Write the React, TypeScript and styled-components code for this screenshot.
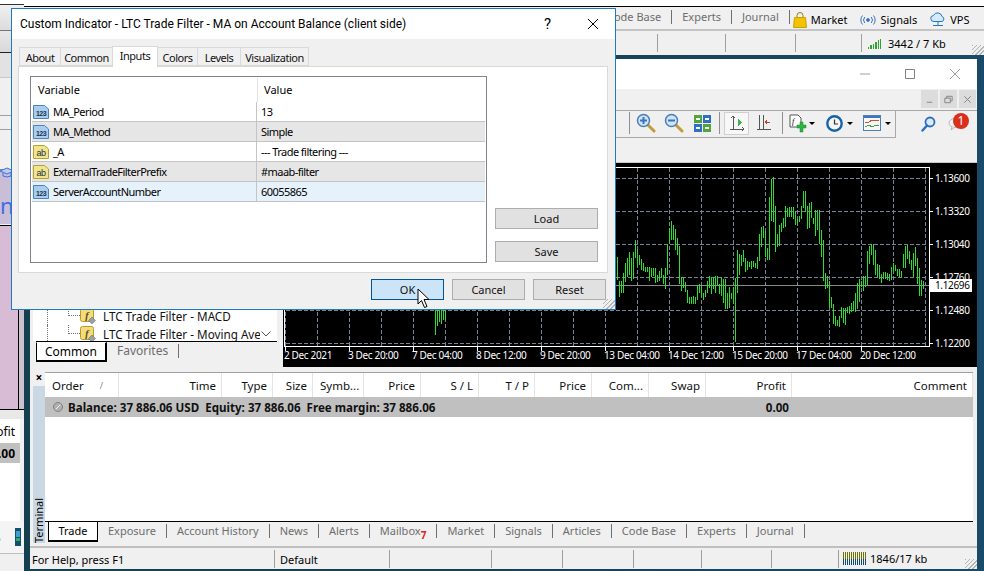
import React from 'react'
import styled, { createGlobalStyle } from 'styled-components'

const UI = `"Noto Sans", "Liberation Sans", Arial, sans-serif`

const GlobalStyle = createGlobalStyle`
  html, body { margin: 0; padding: 0; width: 984px; height: 571px; overflow: hidden; }
  * { box-sizing: border-box; }
  #root { width: 984px; height: 571px; }
`

const Desktop = styled.div`
  position: relative;
  width: 984px;
  height: 571px;
  overflow: hidden;
  background: linear-gradient(90deg, #15404f 0, #15404f 40%, #1a4a6a 100%);
  font-family: ${UI};
  font-size: 11px;
  color: #000;
`

/* ---------- window behind, top of the screen ---------- */
const TopWindow = styled.div`
  position: absolute;
  left: 0;
  top: 0;
  width: 984px;
  height: 55px;
  background: #f0f0f0;
  display: flex;
  flex-direction: column;
`
const TopBlank = styled.div`
  height: 7px;
  background: #fff;
  border-bottom: 1px solid #000;
`
const TopTabs = styled.div`
  height: 24px;
  display: flex;
  align-items: center;
  padding-left: 597px;
  border-bottom: 2px solid #c4c4c4;
  white-space: nowrap;
`
const TopTab = styled.span`
  padding: 0 10px;
  height: 14px;
  line-height: 14px;
  margin-top: -2px;
  color: #6d6d6d;
  border-right: 1px solid #707070;
  &:last-of-type { border-right: 0; }
`
const TopLink = styled.span<{ $left: number }>`
  display: flex;
  align-items: center;
  gap: 4px;
  margin-left: ${(p) => p.$left}px;
  padding-top: 3px;
`
const TopStatus = styled.div`
  flex: 1;
  display: flex;
  align-items: center;
  padding-left: 657px;
  position: relative;
`
const TopCell = styled.span<{ $w: number }>`
  width: ${(p) => p.$w}px;
  height: 18px;
  border-left: 1px solid #a0a0a0;
  display: flex;
  align-items: center;
  gap: 6px;
  padding-left: 6px;
`
const Grip = styled.span`
  position: absolute;
  right: 0;
  bottom: 0;
  width: 12px;
  height: 10px;
  background: repeating-linear-gradient(135deg, #b4b4b4 0 1px, transparent 1px 3px);
`

/* ---------- window behind, left edge ---------- */
const LeftWindow = styled.div`
  position: absolute;
  left: 0;
  top: 0;
  width: 24px;
  height: 571px;
  display: flex;
  flex-direction: column;
  overflow: hidden;
  background: #f0f0f0;
`
const LeftBand = styled.div<{ $h: number; $bg: string; $line?: string }>`
  height: ${(p) => p.$h}px;
  background: ${(p) => p.$bg};
  border-bottom: ${(p) => (p.$line ? `1px solid ${p.$line}` : '0')};
  flex: none;
`
const LeftBlue = styled(LeftBand)`
  color: #3f6fe0;
  font-size: 22px;
  line-height: 22px;
  display: flex;
  flex-direction: column;
  justify-content: flex-end;
  gap: 2px;
  padding-bottom: 8px;
`
const LeftPink = styled.div`
  height: 185px;
  flex: none;
  background: #d8bcd5;
  border-top: 1px solid #000;
  border-bottom: 1px solid #000;
  margin-top: 1px;
  position: relative;
  &::after {
    content: '';
    position: absolute;
    left: 18px;
    top: 0;
    bottom: 0;
    width: 6px;
    background: #cfc0d0;
    border-left: 1px solid #000;
  }
`
const LeftRow = styled.div<{ $h: number; $bold?: boolean; $gray?: boolean }>`
  height: ${(p) => p.$h}px;
  flex: none;
  display: flex;
  justify-content: flex-end;
  align-items: center;
  width: 20px;
  padding-right: 5px;
  white-space: nowrap;
  font-size: 12px;
  font-weight: ${(p) => (p.$bold ? 700 : 400)};
  background: ${(p) => (p.$gray ? '#c0c0c0' : '#fff')};
`
const LeftWhite = styled.div`
  height: 58px;
  width: 20px;
  flex: none;
  background: #fff;
`
const LeftTabs = styled.div`
  height: 33px;
  width: 24px;
  flex: none;
  background: #f4f4f4;
  border-bottom: 1px solid #c0c0c0;
  display: flex;
  align-items: center;
  justify-content: space-between;
  padding: 0 3px 0 0;
  font-size: 12px;
`
const LeftTabText = styled.span`
  margin-left: -6px;
`

/* ---------- main terminal window ---------- */
const MainWindow = styled.div`
  position: absolute;
  left: 30px;
  top: 59px;
  width: 947px;
  height: 510px;
  background: #f0f0f0;
  display: flex;
  flex-direction: column;
`
const MainTitle = styled.div`
  height: 30px;
  flex: none;
  background: #fff;
  display: flex;
  justify-content: flex-end;
`
const WinButton = styled.span`
  width: 45px;
  height: 30px;
  display: flex;
  align-items: center;
  justify-content: center;
`
const MenuRow = styled.div`
  height: 21px;
  flex: none;
  display: flex;
  justify-content: flex-end;
  align-items: flex-start;
  gap: 2px;
  padding: 1px 1px 0 0;
`
const MdiButton = styled.span`
  width: 17px;
  height: 18px;
  background: #dcdcdc;
  display: flex;
  align-items: center;
  justify-content: center;
`
const ToolRow = styled.div`
  height: 28px;
  flex: none;
  display: flex;
  border-top: 1px solid #a8a8a8;
`
const ToolGroup = styled.div`
  width: 866px;
  display: flex;
  align-items: center;
  padding: 0 0 2px 584px;
  border-right: 1px solid #a8a8a8;
  border-bottom: 1px solid #a8a8a8;
`
const ToolSep = styled.span<{ $l: number; $r: number }>`
  width: 1px;
  height: 22px;
  flex: none;
  background: #909090;
  margin: 0 ${(p) => p.$r}px 0 ${(p) => p.$l}px;
`
const ToolSlot = styled.span<{ $w: number; $on?: boolean }>`
  width: ${(p) => p.$w}px;
  height: 23px;
  flex: none;
  display: flex;
  align-items: center;
  justify-content: center;
  overflow: hidden;
  ${(p) => (p.$on ? 'background: #f7f7f7; border: 1px solid #d0d0d0;' : '')}
`
const Caret = styled.span`
  width: 0;
  height: 0;
  flex: none;
  margin: 0 4px 0 -2px;
  border-left: 3px solid transparent;
  border-right: 3px solid transparent;
  border-top: 3px solid #000;
`
const ToolRight = styled.div`
  flex: 1;
  display: flex;
  align-items: center;
  padding: 0 0 2px 25px;
  gap: 2px;
  position: relative;
`
const ChatBadge = styled.span`
  position: absolute;
  left: 57px;
  top: 2px;
  width: 16px;
  height: 16px;
  border-radius: 50%;
  background: #d9301c;
  color: #fff;
  font-size: 12px;
  line-height: 16px;
  text-align: center;
`
const RebarRow = styled.div`
  height: 25px;
  flex: none;
  border-bottom: 1px solid #c8c8c8;
`
const WorkRow = styled.div`
  height: 204px;
  flex: none;
  display: flex;
  padding-left: 3px;
`

/* navigator */
const Navigator = styled.div`
  width: 247px;
  height: 200px;
  display: flex;
  flex-direction: column;
  margin-right: 3px;
  flex: none;
`
const TreeArea = styled.div`
  flex: 1;
  background: #fff;
  margin-right: 3px;
  display: flex;
  flex-direction: column;
  justify-content: flex-end;
  min-height: 0;
`
const TreeRow = styled.div`
  height: 18px;
  display: flex;
  align-items: center;
  padding: 0 5px 0 14px;
  white-space: nowrap;
  flex: none;
  position: relative;
  top: 2px;
`
const TreeStem = styled.span`
  width: 21px;
  height: 18px;
  flex: none;
  border-left: 1px dotted #707070;
`
const TreeBranch = styled.span`
  width: 12px;
  height: 9px;
  flex: none;
  align-self: flex-start;
  border-left: 1px dotted #707070;
  border-bottom: 1px dotted #707070;
`
const TreeText = styled.span`
  flex: 1;
  margin-left: 7px;
  overflow: hidden;
  font-size: 11.7px;
  color: #111;
`
const NavTabs = styled.div`
  height: 21px;
  flex: none;
  display: flex;
  align-items: flex-start;
  padding-left: 3px;
  font-size: 12px;
  background: #f0f0f0;
  position: relative;
`
const NavActive = styled.span`
  width: 71px;
  height: 20px;
  background: #fff;
  border: 1px solid #000;
  border-top-color: #fff;
  border-bottom-width: 2px;
  border-right-width: 2px;
  text-align: center;
  line-height: 18px;
`
const NavTabLine = styled.div`
  height: 1px;
  background: #000;
  margin: 0 3px 0 3px;
  flex: none;
  position: relative;
`
const NavIdle = styled.span`
  height: 14px;
  margin-top: 2px;
  padding: 0 10px;
  line-height: 14px;
  color: #6d6d6d;
  border-right: 1px solid #707070;
`

/* chart */
const ChartBox = styled.div`
  flex: 1;
  background: #000;
  overflow: hidden;
`
const ChartSvg = styled.svg`
  display: block;
  font-family: ${UI};
  font-size: 10px;
  letter-spacing: -0.35px;
`

/* terminal */
const TerminalPane = styled.div`
  height: 171px;
  flex: none;
  margin-top: 5px;
  display: flex;
  padding-left: 3px;
`
const TerminalSide = styled.div`
  width: 12px;
  flex: none;
  display: flex;
  flex-direction: column;
  background: #cad8e4;
`
const SideClose = styled.div`
  height: 14px;
  background: #f0f0f0;
  font-size: 12px;
  font-weight: 700;
  line-height: 12px;
  text-align: center;
`
const SideLabel = styled.div`
  margin-top: auto;
  writing-mode: vertical-rl;
  transform: rotate(180deg);
  font-size: 11px;
  line-height: 12px;
  height: 43px;
`
const TerminalMain = styled.div`
  width: 928px;
  flex: none;
  display: flex;
  flex-direction: column;
`
const TableArea = styled.div`
  flex: 1;
  background: #fff;
  border-top: 1px solid #a0a0a0;
`
const columns = '74px 103px 51px 40px 51px 57px 58px 56px 57px 57px 57px 86px 181px'
const HeadRow = styled.div`
  display: grid;
  grid-template-columns: ${columns};
  height: 24px;
`
const HeadCell = styled.span<{ $left?: boolean }>`
  display: flex;
  align-items: center;
  justify-content: ${(p) => (p.$left ? 'flex-start' : 'flex-end')};
  padding: 0 ${(p) => (p.$left ? 0 : 5)}px 0 ${(p) => (p.$left ? 7 : 0)}px;
  border-right: 1px solid #e4e4e4;
  font-size: 11.5px;
  white-space: nowrap;
  overflow: hidden;
  color: #111;
`
const SortMark = styled.span`
  margin-left: 16px;
  color: #888;
  font-size: 9px;
`
const BalanceRow = styled.div`
  display: grid;
  grid-template-columns: ${columns};
  height: 20px;
  background: #c0c0c0;
  font-size: 11.6px;
  font-weight: 700;
  align-items: center;
  white-space: nowrap;
  color: #111;
`
const BalanceText = styled.span`
  grid-column: 1 / 12;
  display: flex;
  align-items: center;
  gap: 4px;
  padding-left: 7px;
`
const BalanceAmount = styled.span`
  text-align: right;
  padding-right: 3px;
`
const TabStrip = styled.div`
  height: 22px;
  flex: none;
  border-top: 1px solid #000;
  display: flex;
  align-items: flex-start;
  padding-left: 3px;
`
const ActiveTab = styled.span`
  width: 50px;
  height: 20px;
  background: #fff;
  border-left: 1px solid #000;
  border-right: 1px solid #000;
  border-bottom: 2px solid #000;
  text-align: center;
  line-height: 18px;
`
const IdleTab = styled.span`
  height: 14px;
  margin-top: 2px;
  padding: 0 10px;
  line-height: 14px;
  color: #6d6d6d;
  border-right: 1px solid #707070;
  white-space: nowrap;
`
const RedCount = styled.sub`
  color: #e02020;
  font-size: 10px;
  font-weight: 700;
  line-height: 0;
  vertical-align: -4px;
`
const StatusBar = styled.div`
  height: 23px;
  flex: none;
  margin-top: 3px;
  border-top: 2px solid #c0c0c0;
  display: flex;
  align-items: center;
  position: relative;
`
const StatusCell = styled.span<{ $w: number; $pad: number }>`
  width: ${(p) => p.$w}px;
  height: 18px;
  flex: none;
  border-right: 1px solid #a0a0a0;
  padding-left: ${(p) => p.$pad}px;
  line-height: 19px;
  white-space: nowrap;
`
const StatusNet = styled.span`
  display: flex;
  align-items: center;
  gap: 4px;
  padding-left: 4px;
`

/* ---------- dialog ---------- */
const Dialog = styled.div`
  position: absolute;
  left: 11px;
  top: 8px;
  width: 605px;
  height: 302px;
  background: #f0f0f0;
  border: 1px solid #1f7ac4;
  display: flex;
  flex-direction: column;
`
const DialogTitle = styled.div`
  height: 30px;
  flex: none;
  background: #fff;
  display: flex;
  align-items: center;
  padding-left: 8px;
  font-family: Roboto, ${UI};
  font-size: 12px;
`
const TitleText = styled.span`
  flex: 1;
  white-space: nowrap;
`
const TitleButton = styled.span`
  width: 45px;
  text-align: center;
  font-size: 15px;
  display: flex;
  justify-content: center;
`
const DialogTabs = styled.div`
  height: 27px;
  flex: none;
  display: flex;
  align-items: flex-end;
  padding-left: 8px;
  position: relative;
  z-index: 1;
`
const DialogTab = styled.span<{ $w: number; $on?: boolean }>`
  width: ${(p) => p.$w}px;
  height: ${(p) => (p.$on ? 21 : 19)}px;
  margin-bottom: ${(p) => (p.$on ? -1 : 0)}px;
  background: ${(p) => (p.$on ? '#fff' : '#f0f0f0')};
  border: 1px solid #d9d9d9;
  border-bottom: ${(p) => (p.$on ? 0 : '1px solid #d9d9d9')};
  margin-left: -1px;
  text-align: center;
  line-height: ${(p) => (p.$on ? 18 : 20)}px;
  font-size: 11px;
  letter-spacing: -0.5px;
  color: #111;
`
const DialogPage = styled.div`
  height: 207px;
  flex: none;
  margin: 0 7px 0 6px;
  background: #fff;
  border: 1px solid #d9d9d9;
  display: flex;
  padding: 9px 10px 9px 11px;
  gap: 8px;
`
const VarList = styled.div`
  width: 457px;
  flex: none;
  border: 1px solid #7f848c;
  display: flex;
  flex-direction: column;
  padding: 1px;
`
const VarHead = styled.div`
  height: 24px;
  flex: none;
  display: grid;
  grid-template-columns: 225px 1fr;
  align-items: center;
  font-size: 11px;
`
const VarHeadCell = styled.span`
  height: 100%;
  display: flex;
  align-items: center;
  padding: 0 0 2px 6px;
  & + & { border-left: 1px solid #e4e4e4; }
`
const VarRow = styled.div<{ $tone: 'white' | 'gray' | 'blue' }>`
  height: 20px;
  flex: none;
  display: grid;
  grid-template-columns: 225px 1fr;
  align-items: center;
  border-bottom: 1px solid #c4c4c4;
  font-size: 11px;
  letter-spacing: -0.55px;
  background: ${(p) => ({ white: '#fff', gray: '#e6e6e6', blue: '#e5f1fb' }[p.$tone])};
`
const VarName = styled.span`
  height: 100%;
  display: flex;
  align-items: center;
  gap: 4px;
  padding-left: 1px;
  border-right: 1px solid #c4c4c4;
  white-space: nowrap;
`
const VarValue = styled.span`
  padding-left: 4px;
  white-space: nowrap;
`
const SideButtons = styled.div`
  flex: 1;
  display: flex;
  flex-direction: column;
  justify-content: flex-end;
  gap: 12px;
  padding-bottom: 1px;
`
const DlgButton = styled.span<{ $on?: boolean; $w?: number }>`
  width: ${(p) => p.$w ?? 103}px;
  height: 21px;
  flex: none;
  display: flex;
  align-items: center;
  justify-content: center;
  background: ${(p) => (p.$on ? '#cce4f7' : '#e1e1e1')};
  border: 1px solid ${(p) => (p.$on ? '#005499' : '#adadad')};
  font-size: 11px;
  color: #111;
`
const DialogFoot = styled.div`
  flex: 1;
  display: flex;
  justify-content: flex-end;
  gap: 8px;
  padding: 6px 9px 0 0;
  position: relative;
`
const Cursor = styled.svg`
  position: absolute;
  left: 417px;
  top: 288px;
`

/* ---------- drawings ---------- */
const Bars: [number, number][] = [
  [257,280],[281,297],[281,293],[273,293],[263,282],[258,277],[252,275],[258,281],[252,279],[240,258],
  [249,266],[255,265],[259,270],[263,271],[267,272],[267,272],[267,281],[268,277],[268,276],[268,283],
  [275,282],[271,281],[268,277],[275,284],[268,289],[244,275],[228,244],[221,240],[225,240],[229,250],
  [238,255],[246,284],[277,291],[277,288],[282,292],[290,303],[297,304],[297,304],[296,304],[297,304],
  [285,300],[284,293],[286,296],[293,300],[290,297],[281,293],[276,288],[277,294],[277,289],[276,293],
  [276,286],[284,294],[277,296],[279,303],[279,309],[293,309],[287,308],[293,299],[287,304],[278,342],
  [250,293],[254,275],[255,266],[250,262],[258,272],[261,270],[262,267],[261,269],[261,267],[263,268],
  [257,269],[234,261],[227,247],[226,238],[231,257],[248,260],[197,260],[179,221],[177,222],[206,252],
  [234,247],[225,246],[223,232],[218,228],[206,227],[208,217],[207,217],[207,217],[207,219],[211,225],
  [219,225],[216,222],[206,219],[191,208],[191,211],[206,229],[203,228],[202,218],[218,224],[210,236],
  [210,230],[210,244],[230,257],[240,281],[273,289],[276,288],[281,307],[297,308],[304,324],[316,326],
  [320,326],[316,327],[307,318],[308,323],[308,325],[307,313],[306,314],[303,312],[301,311],[293,312],
  [283,309],[279,302],[281,287],[276,291],[276,287],[251,286],[246,264],[244,255],[244,265],[250,275],
  [264,277],[265,279],[274,283],[272,279],[272,279],[273,280],[274,281],[267,280],[263,272],[265,271],
  [269,276],[269,277],[271,278],[254,268],[246,268],[245,259],[251,264],[260,270],[253,277],[247,266],
  [258,284],[268,296],[280,296],[281,289],
]
const LeftBars: [number, number, number][] = [
  [435,300,335],[437,300,326],[439,300,322],[441,300,324],[443,300,320],[445,300,320],
]
const priceTicks = [[178, '1.13600'], [211, '1.13320'], [244, '1.13040'], [277, '1.12760'], [310, '1.12480'], [343, '1.12200']] as const
const timeTicks = [
  [285, '2 Dec 2021'], [349, '3 Dec 20:00'], [413, '7 Dec 04:00'], [477, '8 Dec 12:00'], [541, '9 Dec 20:00'],
  [605, '13 Dec 04:00'], [669, '14 Dec 12:00'], [733, '15 Dec 20:00'], [797, '17 Dec 04:00'], [861, '20 Dec 12:00'],
] as const
const gridXs = Array.from({ length: 20 }, (_, i) => 317 + i * 32)

const Chart = () => (
  <ChartSvg width={693} height={204} viewBox="283 163 693 204" shapeRendering="crispEdges">
    {priceTicks.map(([y]) => (
      <line key={y} x1={286} x2={928} y1={y + 0.5} y2={y + 0.5} stroke="#74859a" strokeDasharray="4 2" />
    ))}
    {[285, ...gridXs].map((x) => (
      <line key={x} x1={x + 0.5} x2={x + 0.5} y1={168} y2={346} stroke="#74859a" strokeDasharray="4 2" />
    ))}
    <line x1={284} x2={929} y1={285.5} y2={285.5} stroke="#8a8a8a" />
    {LeftBars.map(([x, a, b]) => (
      <line key={x} x1={x + 0.5} x2={x + 0.5} y1={a} y2={b} stroke="#2fdc2f" />
    ))}
    {Bars.map(([a, b], i) => (
      <line key={i} x1={617.5 + i * 2} x2={617.5 + i * 2} y1={a} y2={b} stroke="#2fdc2f" />
    ))}
    <rect x={284.5} y={167.5} width={645} height={179} fill="none" stroke="#fff" />
    {timeTicks.map(([x, label]) => (
      <g key={x}>
        <line x1={x + 0.5} x2={x + 0.5} y1={347} y2={351} stroke="#fff" />
        <text x={x - 1} y={359} fill="#fff" shapeRendering="auto">{label}</text>
      </g>
    ))}
    {priceTicks.map(([y, label]) => (
      <g key={y}>
        <line x1={930} x2={933} y1={y + 0.5} y2={y + 0.5} stroke="#fff" />
        <text x={935} y={y + 4} fill="#fff" shapeRendering="auto">{label}</text>
      </g>
    ))}
    <rect x={930} y={279} width={42} height={13} fill="#fff" />
    <text x={935} y={289} fill="#000" shapeRendering="auto">1.12696</text>
  </ChartSvg>
)

const ZoomIcon = ({ plus }: { plus?: boolean }) => (
  <svg width="20" height="20" viewBox="0 0 20 20">
    <line x1="11.5" y1="11.5" x2="18" y2="18" stroke="#c59a3a" strokeWidth="3" strokeLinecap="round" />
    <circle cx="7.5" cy="7.5" r="6" fill="#cfe4f7" stroke="#4a7fb5" strokeWidth="1.5" />
    <rect x="4" y="6.5" width="7" height="2" fill="#3a74c0" />
    {plus && <rect x="6.5" y="4" width="2" height="7" fill="#3a74c0" />}
  </svg>
)
const TileIcon = () => (
  <svg width="17" height="17" viewBox="0 0 17 17" shapeRendering="crispEdges">
    <rect x="0" y="0" width="8" height="8" fill="#4fa63a" />
    <rect x="9" y="0" width="8" height="8" fill="#2f6fc8" />
    <rect x="0" y="9" width="8" height="8" fill="#2f6fc8" />
    <rect x="9" y="9" width="8" height="8" fill="#4fa63a" />
    <rect x="2" y="3" width="4" height="2" fill="#fff" />
    <rect x="11" y="3" width="4" height="2" fill="#fff" />
    <rect x="2" y="12" width="4" height="2" fill="#fff" />
    <rect x="11" y="12" width="4" height="2" fill="#fff" />
  </svg>
)
const ShiftIcon = () => (
  <svg width="16" height="18" viewBox="0 0 16 18" shapeRendering="crispEdges">
    <path d="M4 2v13M1 15h14" stroke="#555" fill="none" />
    <path d="M2 4l2-2 2 2M13 13l2 2-2 2" stroke="#555" fill="none" />
    <path d="M9 5l4 3.500-4 3.500z" fill="#39b54a" />
  </svg>
)
const ScrollIcon = () => (
  <svg width="16" height="18" viewBox="0 0 16 18" shapeRendering="crispEdges">
    <path d="M3 1v14M7 1v14M1 15h14" stroke="#555" fill="none" />
    <path d="M9 8h5" stroke="#b5482a" />
    <path d="M11 5l-3 3 3 3z" fill="#b5482a" />
  </svg>
)
const AddIcon = () => (
  <svg width="18" height="19" viewBox="0 0 18 19">
    <path d="M1 1h8l3 3v9H1z" fill="#fff" stroke="#555" />
    <text x="3" y="10" fontSize="8" fontStyle="italic" fontFamily="Liberation Serif, serif">f</text>
    <path d="M8 11h3V8h3v3h3v3h-3v4h-3v-4H8z" fill="#2fb344" stroke="#178a2c" strokeWidth="0.5" />
  </svg>
)
const ClockIcon = () => (
  <svg width="17" height="17" viewBox="0 0 17 17">
    <circle cx="8.5" cy="8.5" r="7.2" fill="#f5f5f5" stroke="#1763a8" strokeWidth="2.4" />
    <path d="M8.5 4.500v4.500h3.500" stroke="#333" strokeWidth="1.2" fill="none" />
  </svg>
)
const TemplateIcon = () => (
  <svg width="18" height="16" viewBox="0 0 18 16" shapeRendering="crispEdges">
    <rect x="0.5" y="0.5" width="17" height="15" fill="#f7f7f7" stroke="#4f7fb0" />
    <rect x="1" y="1" width="16" height="2" fill="#3c78c0" />
    <path d="M2 7h4l3-2 3 1 4-1" stroke="#c0562a" fill="none" />
    <path d="M2 12l4-2 3 2 4-2 3 1" stroke="#3fa34a" fill="none" />
  </svg>
)
const SearchIcon = () => (
  <svg width="15" height="16" viewBox="0 0 15 16">
    <circle cx="9" cy="6" r="4.5" fill="#dbeaf8" stroke="#2a6fc0" strokeWidth="1.8" />
    <line x1="6" y1="9.5" x2="1.5" y2="14.5" stroke="#2a6fc0" strokeWidth="2.4" strokeLinecap="round" />
  </svg>
)
const ChatIcon = () => (
  <svg width="14" height="14" viewBox="0 0 14 14">
    <ellipse cx="7" cy="6" rx="6" ry="4.5" fill="#f2f2f2" stroke="#b8b8b8" />
    <path d="M4 10l-1 3 4-3" fill="#f2f2f2" stroke="#b8b8b8" />
  </svg>
)
const BagIcon = () => (
  <svg width="14" height="16" viewBox="0 0 14 16">
    <path d="M4 6V3.5a3 3 0 0 1 6 0V6" fill="none" stroke="#9a7a10" />
    <path d="M1.5 5.5h11L13.500 15.500H.5z" fill="#f2c400" stroke="#d09f00" />
  </svg>
)
const SignalIcon = () => (
  <svg width="16" height="12" viewBox="0 0 16 12" fill="none" stroke="#3a72c4">
    <circle cx="8" cy="6" r="1.4" fill="#3a72c4" />
    <path d="M4.800 3a4.500 4.500 0 0 0 0 6M11.200 3a4.500 4.500 0 0 1 0 6M2.500 1.500a7 7 0 0 0 0 9M13.500 1.500a7 7 0 0 1 0 9" />
  </svg>
)
const CloudIcon = () => (
  <svg width="16" height="15" viewBox="0 0 16 15" fill="#d7e9fa" stroke="#1f78c8">
    <path d="M4 9.500a3 3 0 0 1-.5-6 4.500 4.500 0 0 1 8.500 1 2.600 2.600 0 0 1 0 5z" />
    <path d="M8 9.500V13M3 13.500h10" fill="none" />
  </svg>
)
const CapIcon = () => (
  <svg width="14" height="11" viewBox="0 0 14 11" fill="#b9cdea" stroke="#3f6fe0" style={{ marginBottom: 14, flex: 'none' }}>
    <path d="M0 4l7-3 7 3-7 3z" />
    <path d="M3 6v3q4 2 8 0V6" fill="none" />
  </svg>
)
const TypeIcon = ({ kind }: { kind: 'num' | 'text' }) => {
  const fill = kind === 'num' ? '#a9cdef' : '#f1e48d'
  const edge = kind === 'num' ? '#4a84bd' : '#b5a22f'
  return (
    <svg width="16" height="16" viewBox="0 0 16 16" style={{ flex: 'none' }}>
      <path d="M.5 1.500h11l4 3.500v9.500H.5z" fill={fill} stroke={edge} />
      <text x="8" y="11.500" textAnchor="middle" fontSize={kind === 'num' ? 7 : 9} fontWeight={kind === 'num' ? 700 : 400} fontFamily="Liberation Sans, sans-serif" fill="#22324a">
        {kind === 'num' ? '123' : 'ab'}
      </text>
    </svg>
  )
}
const FuncIcon = () => (
  <svg width="16" height="16" viewBox="0 0 16 16" style={{ flex: 'none' }}>
    <rect x="0.500" y="0.500" width="13" height="13" rx="2" fill="#f2dc7d" stroke="#b99a25" />
    <text x="7" y="11" textAnchor="middle" fontSize="10" fontStyle="italic" fontWeight="700" fontFamily="Liberation Serif, serif" fill="#5a4710">f</text>
    <path d="M12 9l3.500 3.500L12 16l-3.500-3.500z" fill="#9aa0a6" stroke="#666" strokeWidth="0.500" />
  </svg>
)
const Glyph = ({ d, color = '#a0a0a0', size = 12 }: { d: string; color?: string; size?: number }) => (
  <svg width={size} height={size} viewBox="0 0 12 12" fill="none" stroke={color} style={{ flex: 'none' }}>
    <path d={d} />
  </svg>
)
const CLOSE = 'M1 1l10 10M11 1L1 11'
const BarsIcon = ({ color }: { color: string }) => (
  <svg width="14" height="11" viewBox="0 0 14 11" shapeRendering="crispEdges" fill={color}>
    {[0, 1, 2, 3, 4, 5].map((i) => (
      <rect key={i} x={i * 2.4} y={9 - i * 1.7} width="1.4" height={2 + i * 1.7} />
    ))}
  </svg>
)
const NetIcon = () => (
  <svg width="23" height="13" viewBox="0 0 23 13" shapeRendering="crispEdges">
    {Array.from({ length: 12 }, (_, i) => (
      <g key={i}>
        <rect x={i * 2} y={0} width={1} height={7} fill="#6f7300" />
        <rect x={i * 2} y={7} width={1} height={6} fill="#0e4a6e" />
      </g>
    ))}
  </svg>
)
const PhoneIcon = () => (
  <svg width="6" height="18" viewBox="0 0 6 18" shapeRendering="crispEdges">
    <rect x="0" y="0" width="6" height="18" rx="1" fill="#14506e" />
    <rect x="1" y="3" width="4" height="6" fill="#3ca0d0" />
    <rect x="1" y="10" width="4" height="3" fill="#39a85a" />
  </svg>
)
const ArrowCursor = () => (
  <Cursor width="14" height="21" viewBox="0 0 14 21">
    <path d="M1 1v15l3.500-3.500 3 7 2.500-1-3-7h5z" fill="#fff" stroke="#000" />
  </Cursor>
)

const varRows = [
  { kind: 'num', tone: 'white', name: 'MA_Period', value: '13' },
  { kind: 'num', tone: 'gray', name: 'MA_Method', value: 'Simple' },
  { kind: 'text', tone: 'white', name: '_A', value: '--- Trade filtering ---' },
  { kind: 'text', tone: 'gray', name: 'ExternalTradeFilterPrefix', value: '#maab-filter' },
  { kind: 'num', tone: 'blue', name: 'ServerAccountNumber', value: '60055865' },
] as const

const dialogTabs = [['About', 42], ['Common', 53], ['Inputs', 46], ['Colors', 41], ['Levels', 44], ['Visualization', 69]] as const

const headers: [string, boolean][] = [
  ['Order', true], ['Time', false], ['Type', false], ['Size', false], ['Symb...', true], ['Price', false], ['S / L', false],
  ['T / P', false], ['Price', false], ['Com...', false], ['Swap', false], ['Profit', false], ['Comment', false],
]
const terminalTabs = ['Exposure', 'Account History', 'News', 'Alerts', 'Mailbox', 'Market', 'Signals', 'Articles', 'Code Base', 'Experts', 'Journal']
const statusCells = [[245, 2, 'For Help, press F1'], [115, 5, 'Default'], [102, 0, ''], [71, 0, ''], [71, 0, ''], [68, 0, ''], [70, 0, ''], [67, 0, '']] as const

export default function App() {
  return (
    <Desktop>
      <GlobalStyle />

      <TopWindow>
        <TopBlank />
        <TopTabs>
          <TopTab>Code Base</TopTab>
          <TopTab>Experts</TopTab>
          <TopTab>Journal</TopTab>
          <TopLink $left={3}><BagIcon />Market</TopLink>
          <TopLink $left={13}><SignalIcon />Signals</TopLink>
          <TopLink $left={13}><CloudIcon />VPS</TopLink>
        </TopTabs>
        <TopStatus>
          <TopCell $w={68} />
          <TopCell $w={70} />
          <TopCell $w={66} />
          <TopCell $w={120}><BarsIcon color="#2fa52f" />3442 / 7 Kb</TopCell>
          <Grip />
        </TopStatus>
      </TopWindow>

      <LeftWindow>
        <LeftBand $h={5} $bg="#fff" $line="#333" />
        <LeftBand $h={26} $bg="linear-gradient(#f0f0f0,#dcdcdc)" $line="#777" />
        <LeftBand $h={22} $bg="linear-gradient(#e8e8e8,#d8d8d8)" $line="#222" />
        <LeftBand $h={25} $bg="#e2e2e2" $line="#c8c8c8" />
        <LeftBand $h={38} $bg="#f0f0f0" $line="#a0a0a0" />
        <LeftBand $h={14} $bg="#f0f0f0" $line="#a0a0a0" />
        <LeftBand $h={40} $bg="#f0f0f0" $line="#888" />
        <LeftBlue $h={54} $bg="#c9bdd8"><CapIcon />nt</LeftBlue>
        <LeftPink />
        <LeftBand $h={9} $bg="#e8e8e8" />
        <LeftRow $h={24}>ofit</LeftRow>
        <LeftRow $h={20} $bold $gray>.00</LeftRow>
        <LeftWhite />
        <LeftTabs><LeftTabText>S</LeftTabText><PhoneIcon /></LeftTabs>
      </LeftWindow>

      <MainWindow>
        <MainTitle>
          <WinButton><Glyph d="M1 6h10" /></WinButton>
          <WinButton><Glyph d="M1.500 1.500h9v9h-9z" color="#808080" /></WinButton>
          <WinButton><Glyph d={CLOSE} /></WinButton>
        </MainTitle>
        <MenuRow>
          <MdiButton><Glyph d="M3 9h6" color="#808080" size={11} /></MdiButton>
          <MdiButton><Glyph d="M2 4.500h6v5H2zM4 4.500V2.500h6v5H8" color="#808080" size={11} /></MdiButton>
          <MdiButton><Glyph d="M2.500 2.500l7 7M9.500 2.500l-7 7" color="#808080" size={11} /></MdiButton>
        </MenuRow>
        <ToolRow>
          <ToolGroup>
            <ToolSlot $w={14} />
            <ToolSep $l={1} $r={2} />
            <ToolSlot $w={28}><ZoomIcon plus /></ToolSlot>
            <ToolSlot $w={28}><ZoomIcon /></ToolSlot>
            <ToolSlot $w={28}><TileIcon /></ToolSlot>
            <ToolSep $l={3} $r={4} />
            <ToolSlot $w={25} $on><ShiftIcon /></ToolSlot>
            <ToolSlot $w={30}><ScrollIcon /></ToolSlot>
            <ToolSep $l={3} $r={2} />
            <ToolSlot $w={26}><AddIcon /></ToolSlot>
            <Caret />
            <ToolSlot $w={30}><ClockIcon /></ToolSlot>
            <Caret />
            <ToolSlot $w={30}><TemplateIcon /></ToolSlot>
            <Caret />
          </ToolGroup>
          <ToolRight>
            <SearchIcon />
            <ToolSlot $w={8} />
            <ChatIcon />
            <ChatBadge>1</ChatBadge>
          </ToolRight>
        </ToolRow>
        <RebarRow />
        <WorkRow>
          <Navigator>
            <TreeArea>
              <TreeRow><TreeStem /><TreeBranch /><FuncIcon /><TreeText>LTC Trade Filter - MACD</TreeText></TreeRow>
              <TreeRow><TreeStem /><TreeBranch /><FuncIcon /><TreeText>LTC Trade Filter - Moving Average</TreeText><Glyph d="M1.500 3.500L6 8l4.500-4.500" color="#555" /></TreeRow>
            </TreeArea>
            <NavTabLine />
            <NavTabs>
              <NavActive>Common</NavActive>
              <NavIdle>Favorites</NavIdle>
            </NavTabs>
          </Navigator>
          <ChartBox><Chart /></ChartBox>
        </WorkRow>
        <TerminalPane>
          <TerminalSide>
            <SideClose>×</SideClose>
            <SideLabel>Terminal</SideLabel>
          </TerminalSide>
          <TerminalMain>
            <TableArea>
              <HeadRow>
                {headers.map(([h, left], i) => (
                  <HeadCell key={i} $left={left}>
                    {h}
                    {i === 0 && <SortMark>/</SortMark>}
                  </HeadCell>
                ))}
              </HeadRow>
              <BalanceRow>
                <BalanceText>
                  <svg width="12" height="12" viewBox="0 0 12 12">
                    <circle cx="6" cy="6" r="4.500" fill="#b0b0b0" stroke="#808080" />
                    <path d="M3.500 8.500l5-5" stroke="#f0f0f0" />
                  </svg>
                  Balance: 37 886.06 USD&nbsp; Equity: 37 886.06&nbsp; Free margin: 37 886.06
                </BalanceText>
                <BalanceAmount>0.00</BalanceAmount>
              </BalanceRow>
            </TableArea>
            <TabStrip>
              <ActiveTab>Trade</ActiveTab>
              {terminalTabs.map((t) => (
                <IdleTab key={t}>
                  {t}
                  {t === 'Mailbox' && <RedCount>7</RedCount>}
                </IdleTab>
              ))}
            </TabStrip>
          </TerminalMain>
        </TerminalPane>
        <StatusBar>
          {statusCells.map(([w, pad, text], i) => (
            <StatusCell key={i} $w={w} $pad={pad}>{text}</StatusCell>
          ))}
          <StatusNet><NetIcon />1846/17 kb</StatusNet>
          <Grip />
        </StatusBar>
      </MainWindow>

      <Dialog>
        <DialogTitle>
          <TitleText>Custom Indicator - LTC Trade Filter - MA on Account Balance (client side)</TitleText>
          <TitleButton>?</TitleButton>
          <TitleButton><Glyph d={CLOSE} color="#000" /></TitleButton>
        </DialogTitle>
        <DialogTabs>
          {dialogTabs.map(([t, w]) => (
            <DialogTab key={t} $w={w} $on={t === 'Inputs'}>{t}</DialogTab>
          ))}
        </DialogTabs>
        <DialogPage>
          <VarList>
            <VarHead>
              <VarHeadCell>Variable</VarHeadCell>
              <VarHeadCell>Value</VarHeadCell>
            </VarHead>
            {varRows.map((r) => (
              <VarRow key={r.name} $tone={r.tone}>
                <VarName><TypeIcon kind={r.kind} />{r.name}</VarName>
                <VarValue>{r.value}</VarValue>
              </VarRow>
            ))}
          </VarList>
          <SideButtons>
            <DlgButton>Load</DlgButton>
            <DlgButton>Save</DlgButton>
          </SideButtons>
        </DialogPage>
        <DialogFoot>
          <DlgButton $on $w={73}>OK</DlgButton>
          <DlgButton $w={73}>Cancel</DlgButton>
          <DlgButton $w={73}>Reset</DlgButton>
          <Grip />
        </DialogFoot>
      </Dialog>
      <ArrowCursor />
    </Desktop>
  )
}
